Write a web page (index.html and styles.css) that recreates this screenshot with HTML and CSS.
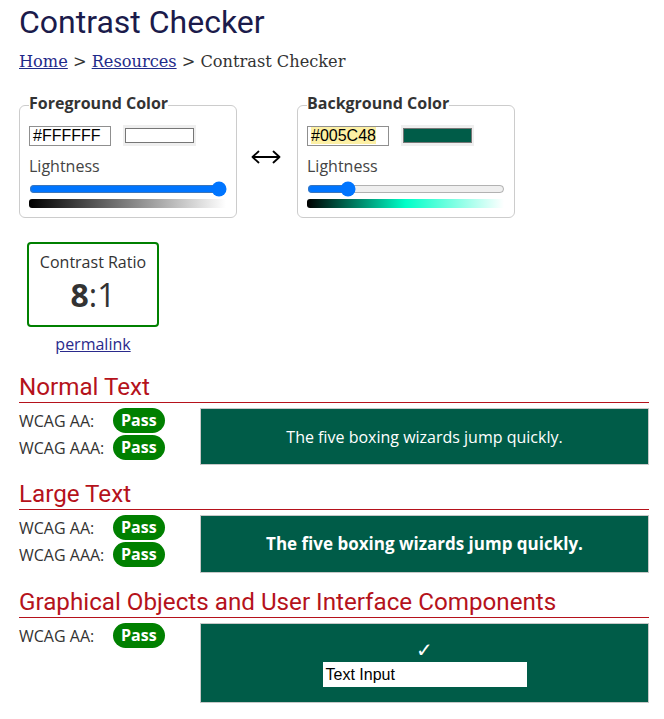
FILE: index.html
```html
<!DOCTYPE html>
<html lang="en">
<head>
<meta charset="utf-8">
<title>Contrast Checker</title>
<link rel="stylesheet" href="styles.css">
</head>
<body>
<div class="page">
  <h1 class="title">Contrast Checker</h1>
  <nav class="crumbs"><a href="#" class="crumb-link">Home</a> &gt; <a href="#" class="crumb-link">Resources</a> &gt; Contrast Checker</nav>

  <div class="pickers">
    <fieldset class="picker">
      <legend class="picker-legend">Foreground Color</legend>
      <div class="inputs">
        <div class="hex">#FFFFFF</div>
        <div class="swatch"><span class="swatch-inner swatch-white"></span></div>
      </div>
      <div class="lbl">Lightness</div>
      <input type="range" class="range" min="0" max="100" value="100">
      <div class="grad grad-fg"></div>
    </fieldset>

    <div class="swap">
      <svg width="30" height="14" viewBox="0 0 30 14" aria-hidden="true">
        <path d="M1.5 7H28.5M7.5 1.5L1.5 7L7.5 12.5M22.5 1.5L28.5 7L22.5 12.5" fill="none" stroke="#000" stroke-width="1.8" stroke-linecap="round" stroke-linejoin="round"/>
      </svg>
    </div>

    <fieldset class="picker">
      <legend class="picker-legend">Background Color</legend>
      <div class="inputs">
        <div class="hex"><span class="hl">#005C48</span></div>
        <div class="swatch"><span class="swatch-inner swatch-green"></span></div>
      </div>
      <div class="lbl">Lightness</div>
      <input type="range" class="range" min="0" max="100" value="18">
      <div class="grad grad-bg"></div>
    </fieldset>
  </div>

  <div class="ratio-wrap">
    <div class="ratio">
      <div class="ratio-label">Contrast Ratio</div>
      <div class="ratio-value"><span class="ratio-num">8</span>:1</div>
    </div>
    <a href="#" class="permalink">permalink</a>
  </div>

  <section class="result result-first">
    <h2 class="result-title">Normal Text</h2>
    <div class="result-row">
      <div class="grades">
        <div class="grade"><span class="level">WCAG AA:</span><span class="pass">Pass</span></div>
        <div class="grade"><span class="level">WCAG AAA:</span><span class="pass">Pass</span></div>
      </div>
      <div class="sample sample-normal">The five boxing wizards jump quickly.</div>
    </div>
  </section>

  <section class="result">
    <h2 class="result-title">Large Text</h2>
    <div class="result-row">
      <div class="grades">
        <div class="grade"><span class="level">WCAG AA:</span><span class="pass">Pass</span></div>
        <div class="grade"><span class="level">WCAG AAA:</span><span class="pass">Pass</span></div>
      </div>
      <div class="sample sample-large">The five boxing wizards jump quickly.</div>
    </div>
  </section>

  <section class="result">
    <h2 class="result-title">Graphical Objects and User Interface Components</h2>
    <div class="result-row">
      <div class="grades">
        <div class="grade"><span class="level">WCAG AA:</span><span class="pass">Pass</span></div>
      </div>
      <div class="sample sample-ui">
        <div class="check">&#10003;</div>
        <div class="text-input">Text Input</div>
      </div>
    </div>
  </section>
</div>
</body>
</html>
```

FILE: styles.css
```css
* { box-sizing: border-box; }

body {
  margin: 0;
  background: #fff;
  color: #333;
  font-family: "Open Sans", sans-serif;
  font-size: 16px;
}

.page {
  width: 649px;
  padding-left: 19px;
}

.title {
  margin: 0;
  padding-top: 3px;
  font-family: Roboto, sans-serif;
  font-weight: 400;
  font-size: 32px;
  line-height: 38px;
  color: #1b1b4b;
}

.crumbs {
  margin-top: 11px;
  font-family: "DejaVu Serif", serif;
  font-size: 16.2px;
  line-height: 20px;
  color: #333;
}

.crumb-link { color: #1f2a8a; }

.pickers {
  display: flex;
  align-items: center;
  margin-top: 20px;
}

.picker {
  margin: 0;
  width: 218px;
  padding: 7px 9px 9px;
  border: 1px solid #ccc;
  border-radius: 6px;
  min-width: 0;
}

.picker-legend {
  padding: 0 0 3px;
  font-weight: 700;
  font-size: 16px;
  line-height: 23px;
  color: #333;
}

.inputs {
  display: flex;
  align-items: center;
  height: 21px;
}

.hex {
  width: 82px;
  height: 20px;
  border: 1px solid #8f8f8f;
  padding: 0 3px;
  font-family: "Liberation Sans", Arial, sans-serif;
  font-size: 16px;
  line-height: 18px;
  color: #000;
}

.hl { background: #fdf0a4; }

.swatch {
  margin-left: 12px;
  width: 73px;
  height: 21px;
  background: #efefef;
  padding: 3px 2px;
}

.swatch-inner {
  display: block;
  height: 15px;
  border: 1px solid #767676;
}

.swatch-white { background: #fff; }
.swatch-green { background: #005c48; }

.lbl {
  margin-top: 9px;
  line-height: 22px;
  color: #444;
}

.range {
  display: block;
  width: 198px;
  height: 16px;
  margin: 4px 0 0;
  accent-color: #0075ff;
}

.grad {
  margin-top: 2px;
  width: 197px;
  height: 9px;
  border-radius: 3px 0 0 3px;
}

.grad-fg { background: linear-gradient(to right, #000, #fff); }
.grad-bg { background: linear-gradient(to right, #000, hsl(167, 100%, 50%), #fff); }

.swap {
  margin: 4px 16px 0 14px;
  display: flex;
}

.ratio-wrap {
  margin: 24px 0 0 8px;
  width: 132px;
  text-align: center;
}

.ratio {
  border: 2px solid #008000;
  border-radius: 4px;
  padding: 7px 0 10px;
  height: 85px;
}

.ratio-label { line-height: 22px; }

.ratio-value {
  margin-top: 2px;
  font-size: 32px;
  line-height: 40px;
}

.ratio-num { font-weight: 700; }

.permalink {
  display: block;
  margin-top: 6px;
  line-height: 22px;
  color: #2a2a8c;
}

.result { margin-top: 15px; }
.result-first { margin-top: 18px; }

.result-title {
  margin: 0;
  padding-bottom: 1px;
  border-bottom: 1px solid #b5121b;
  font-family: Roboto, sans-serif;
  font-weight: 400;
  font-size: 24.2px;
  line-height: 28px;
  color: #b5121b;
}

.result-row {
  display: grid;
  grid-template-columns: 181px 1fr;
  align-items: start;
  margin-top: 5px;
}

.grades {
  display: flex;
  flex-direction: column;
  gap: 2px;
}

.grade {
  display: flex;
  align-items: center;
  height: 25px;
}

.level {
  width: 94px;
  line-height: 22px;
}

.pass {
  background: #008000;
  color: #fff;
  font-weight: 700;
  line-height: 25px;
  padding: 0 8px;
  border-radius: 13px;
}

.sample {
  background: #005c48;
  color: #fff;
  border: 1px solid #c8c8c8;
  display: flex;
  align-items: center;
  justify-content: center;
}

.sample-normal { height: 57px; line-height: 22px; }

.sample-large {
  height: 58px;
  font-weight: 700;
  font-size: 17px;
  line-height: 24px;
}

.sample-ui {
  height: 80px;
  flex-direction: column;
  justify-content: flex-start;
  padding-top: 15px;
}

.check {
  font-family: "DejaVu Sans", sans-serif;
  font-size: 20px;
  line-height: 22px;
  color: #fff;
}

.text-input {
  margin-top: 1px;
  width: 204px;
  height: 25px;
  background: #fff;
  color: #000;
  padding: 0 3px;
  font-family: "Liberation Sans", Arial, sans-serif;
  font-size: 16px;
  line-height: 25px;
}
```
